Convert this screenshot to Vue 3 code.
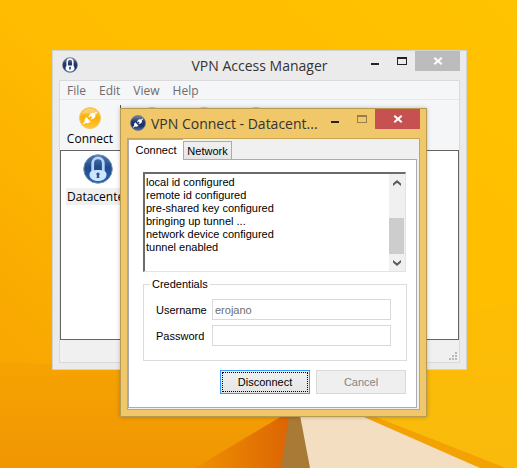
<template>
  <div class="desktop">
    <svg class="wallpaper" viewBox="0 0 517 468" preserveAspectRatio="none" aria-hidden="true">
      <defs>
        <linearGradient id="sky" x1="1" y1="0" x2="0" y2="1">
          <stop offset="0" stop-color="#ffc300" />
          <stop offset="0.5" stop-color="#ffbc00" />
          <stop offset="0.85" stop-color="#f9a801" />
          <stop offset="1" stop-color="#f7a202" />
        </linearGradient>
        <linearGradient id="floor" x1="0" y1="0" x2="0" y2="1">
          <stop offset="0" stop-color="#f6a302" />
          <stop offset="1" stop-color="#f09602" />
        </linearGradient>
        <linearGradient id="fold" x1="0" y1="0" x2="1" y2="0">
          <stop offset="0" stop-color="#f09002" />
          <stop offset="1" stop-color="#dc6404" />
        </linearGradient>
        <linearGradient id="right" x1="0" y1="0" x2="0" y2="1">
          <stop offset="0" stop-color="#fdbd04" />
          <stop offset="1" stop-color="#f9ba0c" />
        </linearGradient>
      </defs>
      <rect width="517" height="468" fill="url(#sky)" />
      <polygon points="300,360 517,300 517,468 300,468" fill="url(#right)" />
      <polygon points="0,362 300,374 300,468 0,468" fill="url(#floor)" />
      <polygon points="292,410 195,468 283,468" fill="url(#fold)" />
      <polygon points="290,410 300,410 311,468 281,468" fill="#a87a35" />
      <polygon points="299,410 352,410 486,468 310,468" fill="#f3dec2" />
      <polygon points="348,410 358,410 506,468 480,468" fill="#f3a203" />
    </svg>

    <section class="window manager">
      <header class="titlebar centered">
        <svg class="app-icon" viewBox="0 0 30 30" aria-hidden="true"><use href="#lock-dark" /></svg>
        <h1>VPN Access Manager</h1>
        <div class="controls">
          <button v-for="c in controls" :key="c" :class="['control', c]" :aria-label="c"><i></i></button>
        </div>
      </header>
      <div class="client">
        <nav class="menubar">
          <button v-for="m in menus" :key="m">{{ m }}</button>
        </nav>
        <div class="toolbar">
          <button class="tool">
            <svg viewBox="0 0 22 22" aria-hidden="true"><use href="#plug-gold" /></svg>
            <span>Connect</span>
          </button>
          <div class="separator"></div>
          <button v-for="t in tools" :key="t" class="tool small" :aria-label="t">
            <svg viewBox="0 0 22 22" aria-hidden="true"><circle cx="11" cy="11" r="11" fill="#e9c66c" /></svg>
          </button>
        </div>
        <div class="sites">
          <button class="site">
            <svg viewBox="0 0 30 30" aria-hidden="true"><use href="#lock-blue" /></svg>
            <span>Datacenter</span>
          </button>
        </div>
        <footer class="statusbar">
          <svg viewBox="0 0 8 8" aria-hidden="true">
            <path d="M6 0h2v2H6zM3 3h2v2H3zM6 3h2v2H6zM0 6h2v2H0zM3 6h2v2H3zM6 6h2v2H6z" fill="#b8b8b8" />
          </svg>
        </footer>
      </div>
    </section>

    <section class="window dialog">
      <header class="titlebar">
        <svg class="app-icon" viewBox="0 0 22 22" aria-hidden="true"><use href="#plug-dark" /></svg>
        <h2>VPN Connect - Datacent...</h2>
        <div class="controls">
          <button
            v-for="c in controls"
            :key="c"
            :class="['control', c]"
            :aria-label="c"
            :disabled="c === 'maximize'"
          ><i></i></button>
        </div>
      </header>
      <div class="client">
        <div class="tabs" role="tablist">
          <button
            v-for="t in tabs"
            :key="t"
            role="tab"
            :aria-selected="tab === t"
            :class="['tab', { active: tab === t }]"
            @click="tab = t"
          >{{ t }}</button>
        </div>
        <form class="pane" @submit.prevent>
          <div class="log">
            <textarea v-model="log" readonly aria-label="Log"></textarea>
            <div class="scrollbar">
              <button type="button" aria-label="Scroll up">
                <svg viewBox="0 0 8 6"><path d="M0 6V3.500L4 0l4 3.500V6L4 2.800z" /></svg>
              </button>
              <div class="track"><div class="thumb"></div></div>
              <button type="button" aria-label="Scroll down">
                <svg viewBox="0 0 8 6"><path d="M0 0v2.500L4 6l4-3.500V0L4 3.200z" /></svg>
              </button>
            </div>
          </div>
          <fieldset>
            <legend>Credentials</legend>
            <div class="field">
              <label for="username">Username</label>
              <input id="username" v-model="username" type="text" disabled>
            </div>
            <div class="field">
              <label for="password">Password</label>
              <input id="password" v-model="password" type="password" disabled>
            </div>
          </fieldset>
          <div class="actions">
            <button type="submit" class="push default"><span>Disconnect</span></button>
            <button type="button" class="push" disabled><span>Cancel</span></button>
          </div>
        </form>
      </div>
    </section>

    <!-- shared icon shapes -->
    <svg class="defs" aria-hidden="true">
      <defs>
        <linearGradient id="gold" x1="0" y1="0" x2="0" y2="1">
          <stop offset="0" stop-color="#fbc84d" />
          <stop offset="0.5" stop-color="#fbb00a" />
          <stop offset="1" stop-color="#ffc936" />
        </linearGradient>
        <linearGradient id="navy" x1="0" y1="0" x2="0" y2="1">
          <stop offset="0" stop-color="#7d8ba8" />
          <stop offset="0.4" stop-color="#23386b" />
          <stop offset="0.7" stop-color="#1b3166" />
          <stop offset="1" stop-color="#5273aa" />
        </linearGradient>
        <linearGradient id="blue" x1="0" y1="0" x2="0" y2="1">
          <stop offset="0" stop-color="#4d77ab" />
          <stop offset="0.45" stop-color="#1f4b8c" />
          <stop offset="1" stop-color="#2c62ae" />
        </linearGradient>
        <g id="plugs" fill="#fff" transform="rotate(-42 11 11)">
          <path d="M2 10.300h2.500l1.500-1.800 3-.8v6.600l-3-.8-1.500-1.800H2z" />
          <path d="M20 10.300h-2.500L16 8.500l-3-.8v1.100h-2.200v1.200H13v2h-2.200v1.200H13v1.100l3-.8 1.500-1.800H20z" />
        </g>
        <g id="plug-gold">
          <circle cx="11" cy="11" r="10.500" fill="url(#gold)" stroke="#f7c65a" />
          <path d="M2.500 7.500a9.200 9.200 0 0 1 17 0q-8.500-3-17 0z" fill="#fff" opacity=".25" />
          <use href="#plugs" />
        </g>
        <g id="plug-dark">
          <circle cx="11" cy="11" r="10.300" fill="url(#navy)" stroke="#66718b" />
          <use href="#plugs" />
        </g>
        <g id="padlock">
          <path d="M9.700 18V9.500a5.300 5.600 0 0 1 10.600 0V18" fill="none" stroke-width="2.800" />
          <path d="M6.500 20.500c0-3.500 3.500-4.500 8.500-4.500s8.500 1 8.500 4.500c0 4-3.500 6.500-8.500 6.500s-8.500-2.500-8.500-6.500z" stroke="none" />
        </g>
        <g id="lock-blue">
          <circle cx="15" cy="15" r="14.300" fill="url(#blue)" stroke="#7896bd" />
          <use href="#padlock" fill="#cfe4ff" stroke="#b7d3f7" />
          <path d="M15 18.500a1.800 1.800 0 0 1 1 3.200l.5 2.300h-3l.5-2.300a1.800 1.800 0 0 1 1-3.200z" fill="#24559b" />
        </g>
        <g id="lock-dark">
          <circle cx="15" cy="15" r="14" fill="url(#navy)" stroke="#66718b" />
          <use href="#padlock" fill="#fff" stroke="#fff" />
          <path d="M13.500 18.500h3v5h-3z" fill="#23386b" />
        </g>
      </defs>
    </svg>
  </div>
</template>

<script setup>
import { ref } from 'vue';

const controls = ['minimize', 'maximize', 'close'];
const menus = ['File', 'Edit', 'View', 'Help'];
const tools = ['Add', 'Modify', 'Delete'];
const tabs = ['Connect', 'Network'];

const tab = ref('Connect');
const username = ref('erojano');
const password = ref('');
const log = ref([
  'local id configured',
  'remote id configured',
  'pre-shared key configured',
  'bringing up tunnel ...',
  'network device configured',
  'tunnel enabled'
].join('\n'));
</script>

<style>
body {
  margin: 0;
}
</style>

<style scoped>
.desktop {
  position: relative;
  min-height: 100vh;
  overflow: hidden;
  background: #ffbb00;
  font-family: "Open Sans", "Noto Sans", sans-serif;
  font-size: 12px;
  color: #000;
}

.wallpaper {
  position: absolute;
  width: 100%;
  height: 100%;
}

.defs {
  position: absolute;
  width: 0;
  height: 0;
}

button {
  margin: 0;
  padding: 0;
  border: none;
  background: none;
  color: inherit;
  font: inherit;
}

.window {
  position: absolute;
  box-sizing: border-box;
  padding: 0 6px 6px;
  border: 1px solid;
}

.manager {
  left: 52px;
  top: 50px;
  width: 415px;
  background: #ebebeb;
  border-color: #d2d2d2;
}

.dialog {
  left: 120px;
  top: 108px;
  width: 307px;
  background: #f0c869;
  border-color: #b89a55;
  box-shadow: 0 0 4px rgba(0, 0, 0, 0.25);
}

.titlebar {
  display: flex;
  height: 29px;
}

.titlebar.centered {
  display: grid;
  grid-template-columns: 1fr auto 1fr;
}

.titlebar h1,
.titlebar h2 {
  margin: 0;
  font-size: 14px;
  font-weight: normal;
  line-height: 30px;
  color: #333;
  white-space: nowrap;
}

.titlebar h2 {
  flex: 1;
  min-width: 0;
  padding-left: 5px;
}

.app-icon {
  width: 16px;
  height: 16px;
  margin: 6px 0 0 3px;
}

.controls {
  display: flex;
  justify-content: flex-end;
}

.control {
  display: flex;
  justify-content: center;
  width: 27px;
  height: 20px;
  color: #222;
}

.control i {
  box-sizing: border-box;
}

.minimize i {
  width: 8px;
  height: 2px;
  margin-top: 12px;
  background: currentColor;
}

.maximize i {
  width: 10px;
  height: 8px;
  margin-top: 6px;
  border: 1px solid currentColor;
  border-top-width: 2px;
}

.maximize:disabled {
  color: #95804b;
}

.close {
  width: 45px;
  background: #bcbcbc;
}

.dialog .close {
  background: #c75050;
}

.close i {
  position: relative;
  width: 10px;
  height: 20px;
}

.close i::before,
.close i::after {
  content: "";
  position: absolute;
  left: 0;
  top: 9px;
  width: 10px;
  height: 2px;
  background: #fff;
  transform: rotate(42deg);
}

.close i::after {
  transform: rotate(-42deg);
}

.client {
  border: 1px solid #dadada;
}

.menubar {
  display: flex;
  gap: 13px;
  height: 18px;
  padding-left: 7px;
  background: #f5f6f7;
  border-bottom: 1px solid #e8e8e8;
  line-height: 20px;
  color: #6d6d6d;
}

.toolbar {
  display: flex;
  height: 50px;
  background: #f5f6f7;
}

.tool {
  display: flex;
  flex-direction: column;
  align-items: center;
  width: 60px;
  padding-top: 7px;
}

.tool.small {
  width: 52px;
}

.tool svg {
  width: 22px;
  height: 22px;
  flex: none;
}

.tool span {
  line-height: 20px;
}

.separator {
  width: 1px;
  margin: 5px 5px 5px 0;
  background: #555;
}

.sites {
  height: 188px;
  background: #fff;
  border: 1px solid #646464;
}

.site {
  display: flex;
  flex-direction: column;
  align-items: center;
  gap: 4px;
  margin: 3px 5px;
}

.site svg {
  width: 30px;
  height: 30px;
}

.site span {
  padding: 0 1px;
  background: #f0f0f0;
  line-height: 17px;
}

.statusbar {
  display: flex;
  justify-content: flex-end;
  align-items: flex-end;
  height: 22px;
  background: #f0f0f0;
}

.statusbar svg {
  width: 8px;
  height: 8px;
  margin: 2px;
}

.dialog .client {
  padding: 0 2px 1px 0;
  background: #f0f0f0;
  border-color: #c8a658;
  font-family: "Liberation Sans", Arial, sans-serif;
  font-size: 11px;
}

.tabs {
  display: flex;
  align-items: flex-end;
  height: 20px;
}

.tab {
  width: 49px;
  height: 18px;
  background: linear-gradient(#f0f0f0, #e5e5e5);
  border: 1px solid #acacac;
  border-bottom: none;
}

.tab.active {
  position: relative;
  width: 55px;
  height: 21px;
  margin-bottom: -1px;
  background: #fff;
  border-right: none;
}

.pane {
  padding: 12px 10px 13px 14px;
  background: #fff;
  border: 1px solid #acacac;
}

.log {
  display: flex;
  height: 97px;
  border: 2px solid;
  border-color: #6b6b6b #e3e3e3 #e3e3e3 #6b6b6b;
  border-bottom-width: 1px;
  border-right-width: 1px;
}

.log textarea {
  flex: 1;
  min-width: 0;
  padding: 2px 1px;
  border: none;
  outline: none;
  resize: none;
  overflow: hidden;
  background: #fff;
  color: #000;
  font: inherit;
  line-height: 13px;
}

.scrollbar {
  display: flex;
  flex-direction: column;
  width: 16px;
  background: #f0f0f0;
}

.scrollbar button {
  display: flex;
  align-items: center;
  justify-content: center;
  height: 17px;
}

.scrollbar svg {
  width: 8px;
  height: 6px;
  fill: #5a5a5a;
}

.track {
  display: flex;
  flex: 1;
  align-items: flex-end;
}

.thumb {
  width: 15px;
  height: 36px;
  background: #cdcdcd;
}

fieldset {
  display: flex;
  flex-direction: column;
  gap: 5px;
  min-width: 0;
  margin: 6px -1px 9px 0;
  padding: 8px 15px 14px 12px;
  border: 1px solid #dcdcdc;
}

legend {
  margin-left: -6px;
  padding: 0 2px;
  line-height: 13px;
}

.field {
  display: flex;
  align-items: center;
  gap: 8px;
}

.field label {
  width: 48px;
  text-align: right;
}

.field input {
  flex: 1;
  box-sizing: border-box;
  min-width: 0;
  height: 21px;
  padding: 0 2px;
  border: 1px solid #d9d9d9;
  border-radius: 0;
  background: #fff;
  color: #6d6d6d;
  font: inherit;
}

.actions {
  display: flex;
  justify-content: flex-end;
  gap: 6px;
}

.push {
  box-sizing: border-box;
  width: 90px;
  height: 24px;
  padding: 1px;
  background: #efefef;
  border: 1px solid #d9d9d9;
  color: #838383;
}

.push span {
  display: block;
  line-height: 20px;
}

.push.default {
  background: linear-gradient(#f0f0f0, #e5e5e5);
  border-color: #3399ff;
  color: #000;
}

.push.default span {
  border: 1px dotted #000;
  line-height: 18px;
}
</style>
